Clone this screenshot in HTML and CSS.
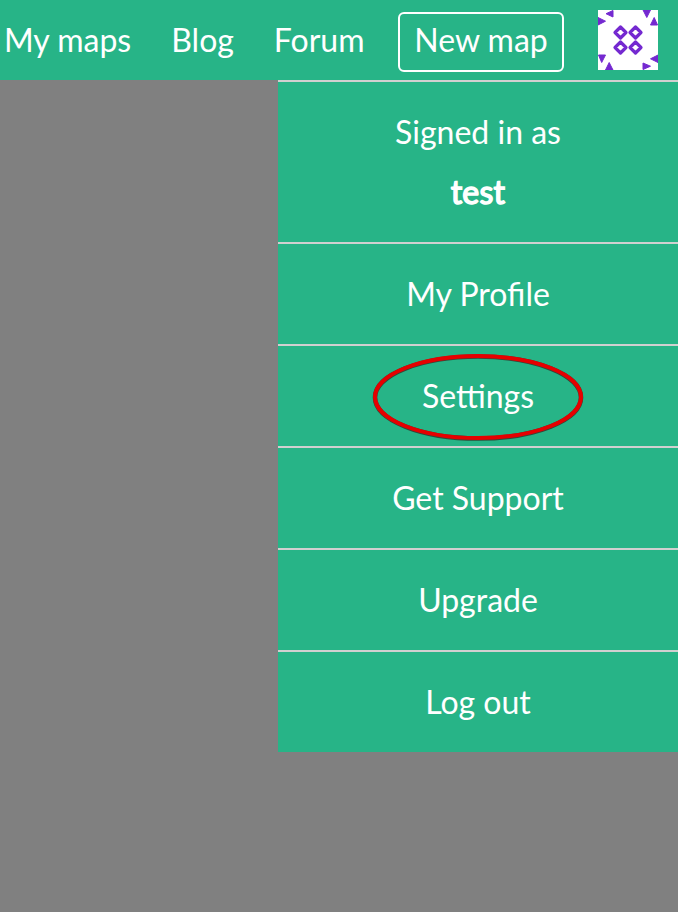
FILE: index.html
```html
<!DOCTYPE html>
<html lang="en">
<head>
<meta charset="utf-8">
<title>Maps</title>
<link rel="stylesheet" href="styles.css">
</head>
<body>
<header class="bar">
  <nav class="links">
    <a class="link">My maps</a>
    <a class="link">Blog</a>
    <a class="link">Forum</a>
  </nav>
  <a class="new">New map</a>
  <svg class="avatar" viewBox="0 0 60 60">
    <rect width="60" height="60" fill="#fff"/>
    <g class="marks">
      <path class="diamonds" d="M22.500 17l5.500 5.500-5.500 5.500-5.500-5.500zM37.500 17l5.500 5.500-5.500 5.500-5.500-5.500zM22.500 32l5.500 5.500-5.500 5.500-5.500-5.500zM37.500 32l5.500 5.500-5.500 5.500-5.500-5.500z"/>
      <path class="triangles" d="M15 .5v6.500L8 3.700zM0 7.500l7.500 3.700L0 15zM45 0h7.500l-3.700 7.500zM52.500 15l3.700-7.500L59.500 15zM.5 45h7L3.700 52.500zM7.500 60l3.700-7.500L15 60zM60 45v7.500l-7.500-3.700zM45 53v6.500l7.500-3.300z"/>
    </g>
  </svg>
</header>
<ul class="menu">
  <li class="item user"><span>Signed in as</span><strong>test</strong></li>
  <li class="item">My Profile</li>
  <li class="item settings">Settings
    <svg class="ring" viewBox="0 0 212 88"><ellipse class="shade" cx="106" cy="44.500" rx="103" ry="41"/><ellipse cx="106" cy="44" rx="103" ry="41"/></svg>
  </li>
  <li class="item">Get Support</li>
  <li class="item">Upgrade</li>
  <li class="item">Log out</li>
</ul>
</body>
</html>
```
FILE: styles.css
```css
* { box-sizing: border-box; }
body { margin: 0; height: 912px; overflow: hidden; background: #808080; color: #fff; font: 32px/60px Lato, sans-serif; }
.bar { display: flex; justify-content: flex-end; align-items: center; height: 80px; padding-right: 20px; background: #27b487; }
.links { display: flex; gap: 40px; margin-right: 33.500px; }
.new { width: 166px; height: 60px; margin-top: 4px; border: 2px solid #fff; border-radius: 6px; line-height: 52px; text-align: center; }
.avatar { width: 60px; height: 60px; margin-left: 34px; }
.marks { filter: blur(.5px); }
.diamonds { fill: none; stroke: #7429d0; stroke-width: 3.200; stroke-linejoin: round; }
.triangles { fill: #7429d0; stroke: #7429d0; stroke-width: 1; }
.menu { width: 400px; margin: 0 0 0 auto; padding: 0; list-style: none; background: #27b487; text-align: center; }
.item { height: 102px; padding-top: 20px; border-top: 2px solid #d0d0d0; }
.user { display: flex; flex-direction: column; height: 162px; }
.user strong { font-weight: 400; letter-spacing: .2px; -webkit-text-stroke: 1.500px #fff; }
.settings { position: relative; }
.ring { position: absolute; left: 94px; top: 7px; width: 212px; height: 88px; fill: none; stroke: #e60000; stroke-width: 4; }
.shade { stroke: #34483a; stroke-width: 4.600; }
```
